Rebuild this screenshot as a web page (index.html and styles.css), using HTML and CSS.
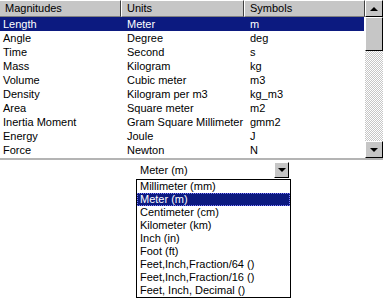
FILE: index.html
```html
<!DOCTYPE html>
<html lang="en">
<head>
    <meta charset="UTF-8">
    <title>Units</title>
    <link rel="stylesheet" href="styles.css">
</head>
<body>
    <!-- Magnitudes grid -->
    <div class="grid">
        <div class="table">
            <div class="row head">
                <div class="hcell">Magnitudes</div>
                <div class="hcell">Units</div>
                <div class="hcell">Symbols</div>
            </div>
            <div class="row sel"><div>Length</div><div>Meter</div><div>m</div></div>
            <div class="row"><div>Angle</div><div>Degree</div><div>deg</div></div>
            <div class="row"><div>Time</div><div>Second</div><div>s</div></div>
            <div class="row"><div>Mass</div><div>Kilogram</div><div>kg</div></div>
            <div class="row"><div>Volume</div><div>Cubic meter</div><div>m3</div></div>
            <div class="row"><div>Density</div><div>Kilogram per m3</div><div>kg_m3</div></div>
            <div class="row"><div>Area</div><div>Square meter</div><div>m2</div></div>
            <div class="row"><div>Inertia Moment</div><div>Gram Square Millimeter</div><div>gmm2</div></div>
            <div class="row"><div>Energy</div><div>Joule</div><div>J</div></div>
            <div class="row"><div>Force</div><div>Newton</div><div>N</div></div>
        </div>
        <div class="vscroll">
            <div class="sbtn"><span class="tri up"></span></div>
            <div class="thumb"></div>
            <div class="track"></div>
            <div class="sbtn"><span class="tri down"></span></div>
        </div>
    </div>

    <!-- Unit combo box, opened -->
    <div class="combo-area">
        <div class="combo">
            <div class="combo-text">Meter (m)</div>
            <div class="sbtn small"><span class="tri down"></span></div>
        </div>
        <ul class="list">
            <li>Millimeter (mm)</li>
            <li class="sel">Meter (m)</li>
            <li>Centimeter (cm)</li>
            <li>Kilometer (km)</li>
            <li>Inch (in)</li>
            <li>Foot (ft)</li>
            <li>Feet,Inch,Fraction/64 ()</li>
            <li>Feet,Inch,Fraction/16 ()</li>
            <li>Feet, Inch, Decimal ()</li>
        </ul>
    </div>
</body>
</html>
```

FILE: styles.css
```css
body {
    font-family: "Liberation Sans", Arial, sans-serif;
    font-size: 11px;
    margin: 0;
    width: 383px;
    height: 302px;
    overflow: hidden;
    background: #ffffff;
    color: #000000;
}

.grid {
    display: flex;
    height: 158px;
    border-bottom: 2px solid #b4b4b4;
}

.table {
    width: 365px;
    display: flex;
    flex-direction: column;
}

.row {
    display: grid;
    grid-template-columns: 121px 123px 1fr;
    height: 14px;
    line-height: 14px;
    margin-right: 1px;
    white-space: nowrap;
}

.row div {
    padding-left: 6px;
    overflow: hidden;
}

.row div:first-child {
    padding-left: 3px;
}

.row.sel {
    background: #0c1a80;
    color: #ffffff;
}

.row.head {
    height: 17px;
    line-height: 15px;
    margin-right: 0;
}

.row .hcell {
    padding-left: 5px;
    background: #c6c6c6;
    border-top: 1px solid #ffffff;
    border-left: 1px solid #ffffff;
    border-right: 1px solid #404040;
    border-bottom: 1px solid #808080;
}

.row .hcell:first-child {
    padding-left: 5px;
    border-left: none;
}

.vscroll {
    width: 18px;
    display: flex;
    flex-direction: column;
}

.sbtn {
    width: 16px;
    height: 15px;
    flex: none;
    background: #c6c6c6;
    border-top: 1px solid #ffffff;
    border-left: 1px solid #ffffff;
    border-right: 1px solid #000000;
    border-bottom: 1px solid #000000;
    display: flex;
    align-items: center;
    justify-content: center;
}

.thumb {
    width: 16px;
    height: 32px;
    flex: none;
    background: #c6c6c6;
    border-top: 1px solid #ffffff;
    border-left: 1px solid #ffffff;
    border-right: 1px solid #000000;
    border-bottom: 1px solid #000000;
}

.track {
    flex: 1;
    background: repeating-conic-gradient(#c6c6c6 0 25%, #ffffff 0 50%) 0 0 / 2px 2px;
}

.tri {
    width: 0;
    height: 0;
    border-left: 4px solid transparent;
    border-right: 4px solid transparent;
}

.tri.up {
    border-bottom: 4px solid #000000;
}

.tri.down {
    border-top: 4px solid #000000;
}

.combo-area {
    margin-left: 136px;
    width: 155px;
}

.combo {
    display: flex;
    align-items: center;
    height: 19px;
}

.combo-text {
    flex: 1;
    padding-left: 4px;
    padding-top: 1px;
}

.sbtn.small {
    width: 13px;
    height: 14px;
    margin-right: 2px;
}

.list {
    list-style: none;
    margin: 0;
    padding: 0;
    border: 1px solid #000000;
    height: 117px;
    overflow: hidden;
}

.list li {
    height: 13px;
    line-height: 13px;
    padding-left: 3px;
    white-space: nowrap;
}

.list li.sel {
    background: #0c1a80;
    color: #ffffff;
    outline: 1px dotted #8080ff;
    outline-offset: -1px;
}
```
